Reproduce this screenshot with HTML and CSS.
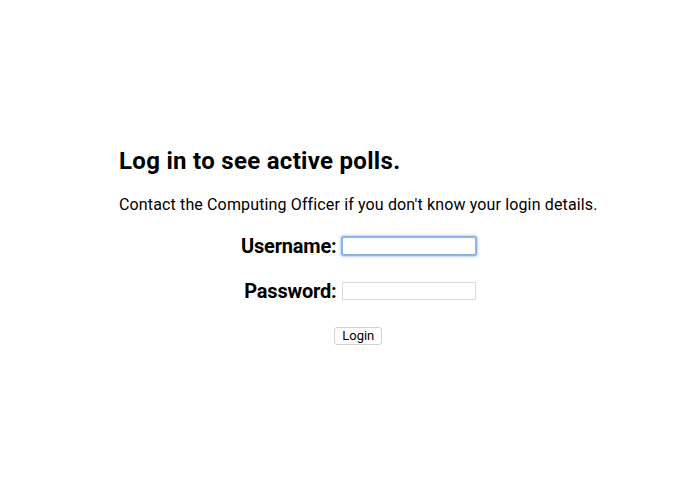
FILE: index.html
```html
<!DOCTYPE html>
<html lang="en">
  <head>
    <meta charset="UTF-8" />
    <meta name="viewport" content="width=device-width, initial-scale=1.0" />
    <title>Polls - Login</title>
    <link rel="stylesheet" href="styles.css">
  </head>
  <body>
    <div class="container">
      <h2>Log in to see active polls.</h2>
      <p class="info">Contact the Computing Officer if you don't know your login details.</p>
      <form>
        <div class="fields">
          <label for="username">Username:</label>
          <input type="text" id="username" class="field focused" />
          <label for="password">Password:</label>
          <input type="password" id="password" class="field" />
        </div>
        <div class="actions">
          <button type="button" class="btn">Login</button>
        </div>
      </form>
    </div>
  </body>
</html>
```

FILE: styles.css
```css
body {
  margin: 0;
  background-color: #fff;
  color: #000;
  font-family: Roboto, "Liberation Sans", sans-serif;
}
.container {
  width: fit-content;
  margin-left: 119px;
  padding-top: 147px;
}
h2 {
  margin: 0;
  font-size: 24px;
  line-height: 28px;
  font-weight: 700;
  letter-spacing: 0.3px;
}
.info {
  margin: 20px 0 0;
  font-size: 16px;
  line-height: 19px;
  letter-spacing: 0.14px;
}
.fields {
  display: grid;
  grid-template-columns: auto auto;
  justify-content: center;
  align-items: center;
  column-gap: 5px;
  row-gap: 21px;
  margin-top: 20px;
  line-height: 24px;
}
.fields label {
  justify-self: end;
  font-size: 20px;
  font-weight: 700;
  letter-spacing: -0.2px;
}
.field {
  box-sizing: border-box;
  width: 134px;
  height: 18px;
  margin: 0;
  padding: 0 3px;
  border: 1px solid #dcdcdc;
  font-size: 13px;
  outline: none;
}
.field.focused {
  border-color: #8db3ec;
  box-shadow: 0 0 0 1px #8db3ec, 0 0 2px 2px rgba(120, 165, 235, 0.5);
  border-radius: 2px;
}
.actions {
  display: flex;
  justify-content: center;
  margin-top: 24px;
}
.btn {
  box-sizing: border-box;
  height: 18px;
  padding: 0 7px;
  border: 1px solid #d2d2d2;
  border-radius: 3px;
  background-color: #fff;
  font-family: Roboto, "Liberation Sans", sans-serif;
  font-size: 13px;
  line-height: 16px;
  color: #000;
}
```
